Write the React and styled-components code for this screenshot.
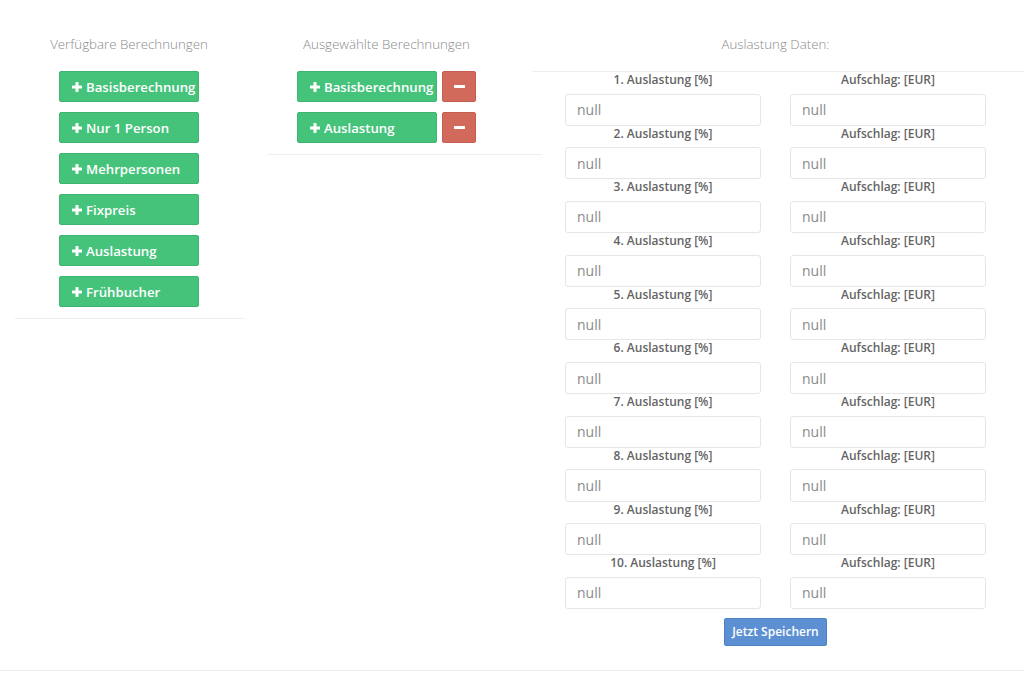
import React from 'react'
import styled, { createGlobalStyle } from 'styled-components'

const GlobalStyle = createGlobalStyle`
  html, body {
    margin: 0;
    padding: 0;
    background: #fff;
    font-family: "Open Sans", "Liberation Sans", sans-serif;
    overflow: hidden;
  }
`

const Page = styled.div`
  width: 1024px;
  height: 694px;
  display: flex;
  flex-direction: column;
`

const Row = styled.div`
  display: flex;
  align-items: flex-start;
`

const Column = styled.div`
  width: ${(p) => p.$width}px;
  padding-right: ${(p) => p.$padRight || 0}px;
  box-sizing: border-box;
  display: flex;
  flex-direction: column;
  align-items: center;
`

const Title = styled.h4`
  margin: 34px 0 17px;
  font-size: 13.3px;
  line-height: 20px;
  font-weight: 300;
  color: #8a8a8a;
  text-align: center;
  white-space: nowrap;
`

const ButtonList = styled.div`
  display: flex;
  flex-direction: column;
  gap: 10px;
`

const ButtonRow = styled.div`
  display: flex;
  gap: 5px;
`

const AddButton = styled.button`
  width: 140px;
  height: 31px;
  padding: 0 0 0 12px;
  display: flex;
  align-items: center;
  gap: 4px;
  background: #46c37b;
  border: 1px solid #3fb470;
  border-radius: 2px;
  color: #fff;
  font-family: inherit;
  font-size: 13.2px;
  font-weight: 600;
  white-space: nowrap;
  cursor: pointer;
  box-sizing: border-box;
  svg {
    flex-shrink: 0;
  }
`

const RemoveButton = styled.button`
  width: 34px;
  height: 31px;
  padding: 0;
  display: flex;
  align-items: center;
  justify-content: center;
  background: #d26a5c;
  border: 1px solid #c55e50;
  border-radius: 2px;
  color: #fff;
  cursor: pointer;
  box-sizing: border-box;
`

const Divider = styled.hr`
  align-self: stretch;
  border: 0;
  border-top: 1px solid #eeeeee;
  margin: ${(p) => p.$margin};
`

const FormGrid = styled.div`
  display: grid;
  grid-template-columns: 196px 196px;
  column-gap: 29px;
`

const Field = styled.div`
  display: flex;
  flex-direction: column;
`

const Label = styled.label`
  display: block;
  text-align: center;
  font-size: 12px;
  line-height: 15px;
  font-weight: 600;
  color: #646464;
  margin-bottom: 6.5px;
`

const Input = styled.input`
  height: 32.2px;
  box-sizing: border-box;
  border: 1px solid #e6e6e6;
  border-radius: 3px;
  padding: 0 11px;
  font-family: inherit;
  font-size: 14px;
  color: #555;
  outline: none;
  &::placeholder {
    color: #8a8a8a;
  }
`

const SaveButton = styled.button`
  margin-top: 9px;
  width: 103px;
  height: 28px;
  background: #5c90d2;
  border: 1px solid #4d82c6;
  border-radius: 2px;
  color: #fff;
  font-family: inherit;
  font-size: 12px;
  font-weight: 600;
  cursor: pointer;
`

const FooterLine = styled.hr`
  border: 0;
  border-top: 1px solid #eeeeee;
  margin: 24px 0 0;
  width: 100%;
`

const PlusIcon = () => (
  <svg width="10" height="10" viewBox="0 0 10 10" fill="#fff">
    <rect x="3.5" y="0" width="3" height="10" rx="0.5" />
    <rect x="0" y="3.5" width="10" height="3" rx="0.5" />
  </svg>
)

const MinusIcon = () => (
  <svg width="11" height="3" viewBox="0 0 11 3" fill="#fff">
    <rect x="0" y="0" width="11" height="3" rx="0.5" />
  </svg>
)

const available = ['Basisberechnung', 'Nur 1 Person', 'Mehrpersonen', 'Fixpreis', 'Auslastung', 'Frühbucher']
const selected = ['Basisberechnung', 'Auslastung']
const rows = Array.from({ length: 10 }, (_, i) => i + 1)

export default function App() {
  return (
    <Page>
      <GlobalStyle />
      <Row>
        <Column $width={258}>
          <Title>Verfügbare Berechnungen</Title>
          <ButtonList>
            {available.map((name) => (
              <AddButton key={name}>
                <PlusIcon />
                {name}
              </AddButton>
            ))}
          </ButtonList>
          <Divider $margin="11px 13px 0 15px" />
        </Column>

        <Column $width={269} $padRight={12}>
          <Title>Ausgewählte Berechnungen</Title>
          <ButtonList>
            {selected.map((name) => (
              <ButtonRow key={name}>
                <AddButton>
                  <PlusIcon />
                  {name}
                </AddButton>
                <RemoveButton>
                  <MinusIcon />
                </RemoveButton>
              </ButtonRow>
            ))}
          </ButtonList>
          <Divider $margin="11px -27px 0 9px" />
        </Column>

        <Column $width={497}>
          <Title>Auslastung Daten:</Title>
          <Divider $margin="0 -20px 0 5px" />
          <FormGrid>
            {rows.map((n) => (
              <React.Fragment key={n}>
                <Field>
                  <Label>{n}. Auslastung [%]</Label>
                  <Input placeholder="null" />
                </Field>
                <Field>
                  <Label>Aufschlag: [EUR]</Label>
                  <Input placeholder="null" />
                </Field>
              </React.Fragment>
            ))}
          </FormGrid>
          <SaveButton>Jetzt Speichern</SaveButton>
        </Column>
      </Row>
      <FooterLine />
    </Page>
  )
}
